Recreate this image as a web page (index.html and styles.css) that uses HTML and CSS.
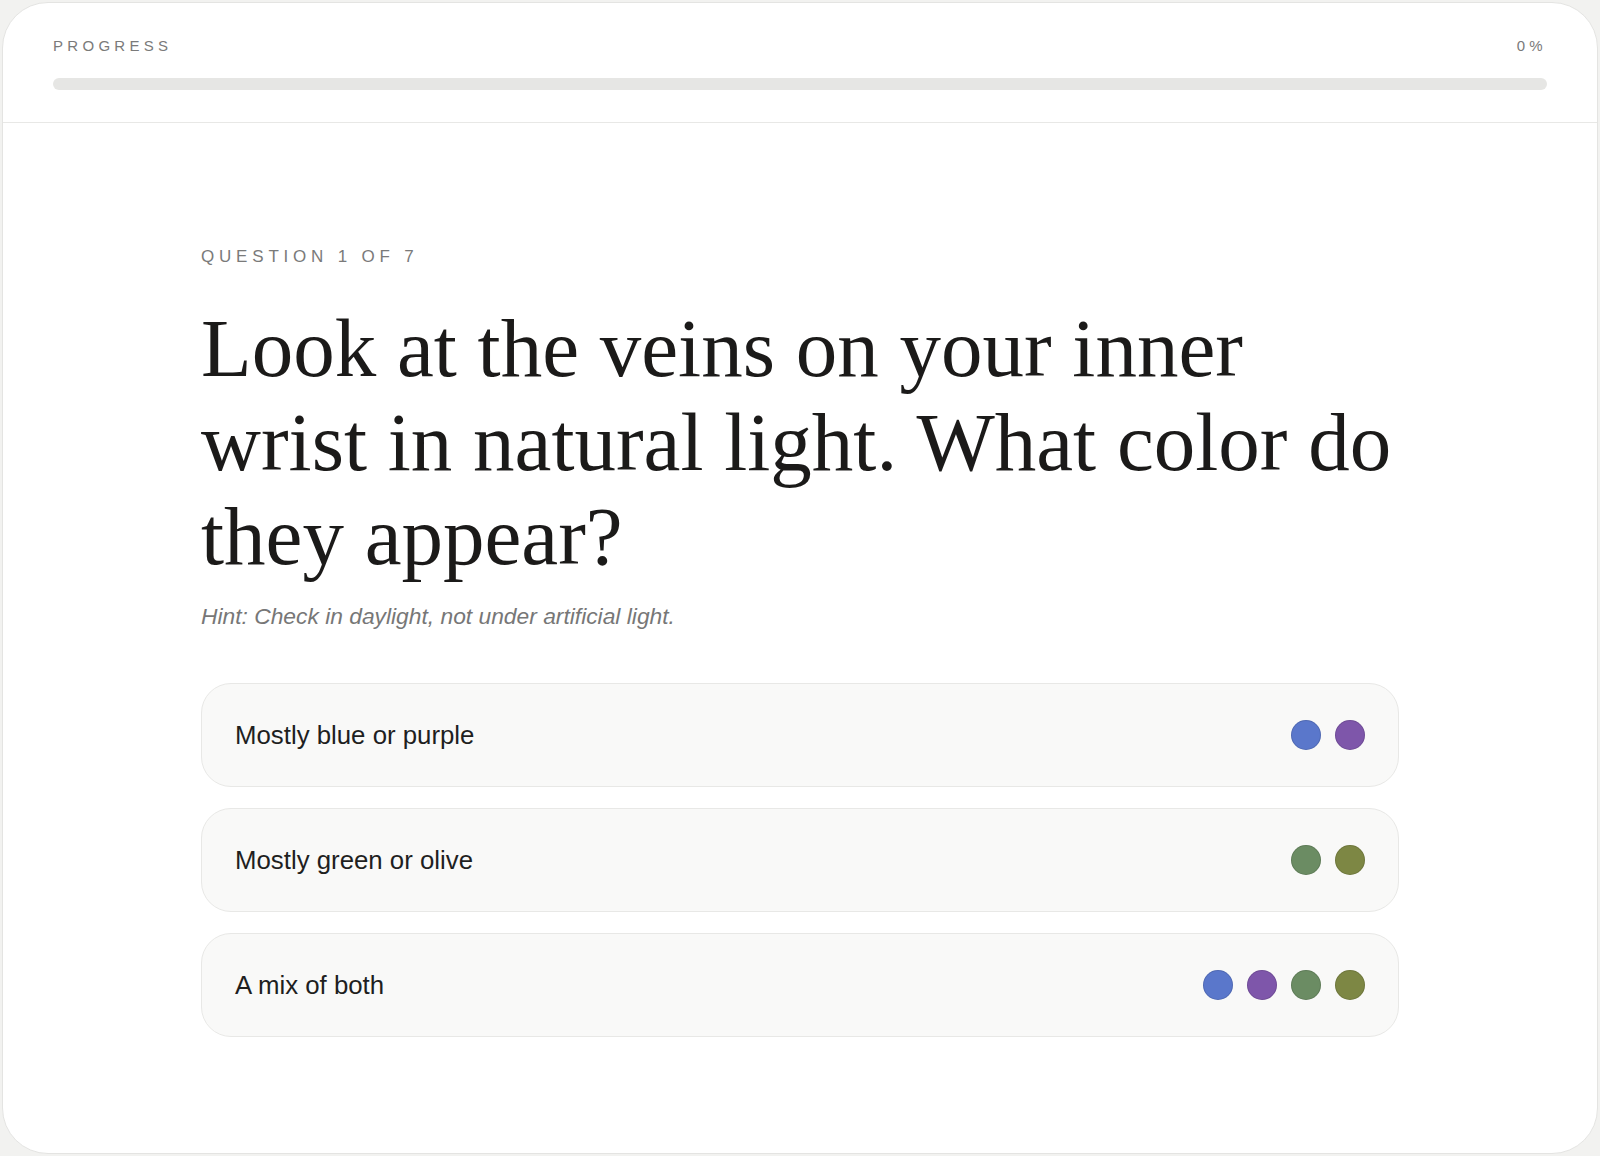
FILE: index.html
```html
<!DOCTYPE html>
<html lang="en">

<head>
    <meta charset="UTF-8">
    <meta name="viewport" content="width=device-width, initial-scale=1.0">
    <title>Undertone Quiz</title>
    <link rel="stylesheet" href="styles.css">
</head>

<body class="body">
    <div class="card">
        <div class="progress">
            <div class="progress-row">
                <span class="label">Progress</span>
                <span class="label">0%</span>
            </div>
            <div class="bar">
                <div class="bar-fill" style="width: 0%;"></div>
            </div>
        </div>

        <div class="quiz">
            <p class="label step">Question 1 of 7</p>
            <h1 class="question">Look at the veins on your inner wrist in natural light. What color do they appear?</h1>
            <p class="hint">Hint: Check in daylight, not under artificial light.</p>

            <div class="options">
                <button class="option">
                    <span>Mostly blue or purple</span>
                    <span class="dots">
                        <span class="dot blue"></span>
                        <span class="dot purple"></span>
                    </span>
                </button>
                <button class="option">
                    <span>Mostly green or olive</span>
                    <span class="dots">
                        <span class="dot green"></span>
                        <span class="dot olive"></span>
                    </span>
                </button>
                <button class="option">
                    <span>A mix of both</span>
                    <span class="dots">
                        <span class="dot blue"></span>
                        <span class="dot purple"></span>
                        <span class="dot green"></span>
                        <span class="dot olive"></span>
                    </span>
                </button>
            </div>
        </div>
    </div>
</body>

</html>
```

FILE: styles.css
```css
.body {
    margin: 0;
    padding: 2px;
    background-color: #f2f2f0;
    font-family: 'Liberation Sans', Arial, sans-serif;
    color: #1e1e1e;
}

.card {
    box-sizing: border-box;
    height: 1152px;
    background-color: #fff;
    border: 1px solid #e4e4e2;
    border-radius: 46px;
    overflow: hidden;
}

.progress {
    padding: 33px 50px 32px;
    border-bottom: 1.5px solid #e8e8e6;
}

.progress-row {
    display: flex;
    justify-content: space-between;
    margin-bottom: 22px;
}

.label {
    font-size: 15px;
    line-height: 20px;
    letter-spacing: 4.3px;
    text-transform: uppercase;
    color: #7a7a7a;
}

.bar {
    height: 12px;
    border-radius: 6px;
    background-color: #e6e6e4;
    overflow: hidden;
}

.bar-fill {
    height: 100%;
    background-color: #1e1e1e;
}

.quiz {
    max-width: 1198px;
    margin: 0 auto;
    padding-top: 124px;
}

.step {
    margin: 0;
    font-size: 17px;
    letter-spacing: 4.8px;
}

.question {
    margin: 34px 0 0;
    font-family: 'Liberation Serif', 'Times New Roman', serif;
    font-size: 83px;
    font-weight: normal;
    line-height: 94px;
    color: #1b1a19;
}

.hint {
    margin: 18px 0 0;
    font-size: 22.8px;
    line-height: 31px;
    font-style: italic;
    color: #777;
}

.options {
    display: flex;
    flex-direction: column;
    gap: 21px;
    margin-top: 51px;
}

.option {
    box-sizing: border-box;
    display: flex;
    justify-content: space-between;
    align-items: center;
    height: 104px;
    padding: 0 33px;
    font: inherit;
    font-size: 25.8px;
    color: #1f1f1f;
    text-align: left;
    background-color: #f9f9f8;
    border: 1.5px solid #e8e8e6;
    border-radius: 30px;
    cursor: pointer;
}

.dots {
    display: flex;
    gap: 14px;
}

.dot {
    width: 30px;
    height: 30px;
    border-radius: 50%;
    box-shadow: inset 0 0 0 1px rgb(0 0 0 / 0.12);
}

.blue {
    background-color: #5a77cb;
}

.purple {
    background-color: #7e56aa;
}

.green {
    background-color: #6b8c63;
}

.olive {
    background-color: #7d8744;
}
```
